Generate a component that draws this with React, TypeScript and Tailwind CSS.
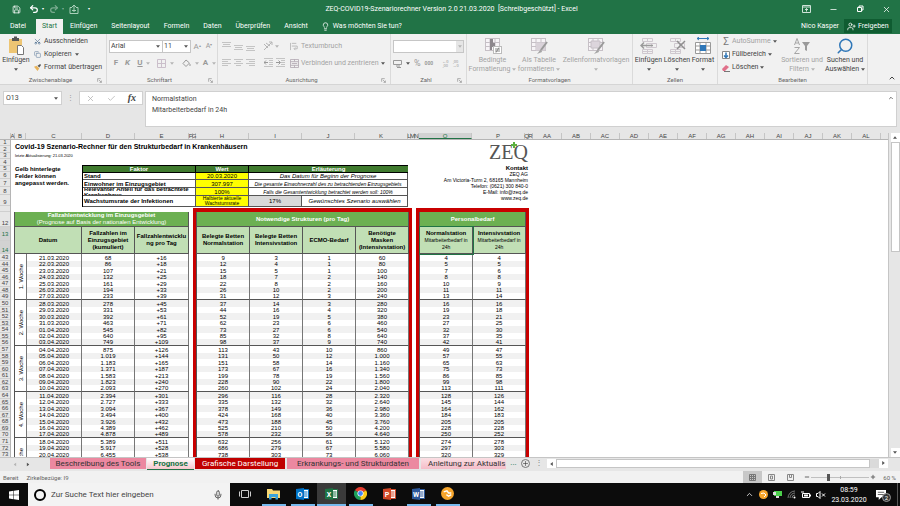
import React from "react";
import {
  ChevronUp,
  Lightbulb,
  Mic,
  Minus,
  Plus,
  Redo2,
  Save,
  Search,
  Undo2,
  X,
  Check,
  UserPlus,
  Copy,
  Scissors,
} from "lucide-react";

const menu = ["Einfügen", "Seitenlayout", "Formeln", "Daten", "Überprüfen", "Ansicht"];

const rowHeads = [
  { n: "1", h: "h-[6px]" },
  { n: "2", h: "h-[7px]" },
  { n: "3", h: "h-[6px]" },
  { n: "4", h: "h-[7px]" },
  { n: "5", h: "h-[6px]" },
  { n: "6", h: "h-[7px]" },
  { n: "7", h: "h-[8px]" },
  { n: "8", h: "h-[8px]" },
  { n: "9", h: "h-[11px]" },
  { n: "", h: "h-[6px]" },
  { n: "12", h: "h-[15px]" },
  { n: "13", h: "h-[14px]" },
  { n: "14", h: "h-[13px]" },
];

const colHeads = [
  { n: "A", w: "w-[4px]" },
  { n: "B", w: "w-[11px]" },
  { n: "C", w: "w-[56px]" },
  { n: "D", w: "w-[53px]" },
  { n: "E", w: "w-[54px]" },
  { n: "F", w: "w-[4px]" },
  { n: "G", w: "w-[3px]" },
  { n: "H", w: "w-[53px]" },
  { n: "I", w: "w-[53px]" },
  { n: "J", w: "w-[53px]" },
  { n: "K", w: "w-[53px]" },
  { n: "L", w: "w-[3px]" },
  { n: "M", w: "w-[4px]" },
  { n: "N", w: "w-[4px]" },
  { n: "O", w: "w-[53px]" },
  { n: "P", w: "w-[53px]" },
  { n: "Q", w: "w-[4px]" },
  { n: "R", w: "w-[4px]" },
  ...["AA", "AB", "AC", "AD", "AE", "AF", "AG", "AH", "AI", "AJ", "AK", "AL"].map((n) => ({
    n,
    w: "w-[29px]",
  })),
];

const days = [
  ["21.03.2020", "68", "+16", "9", "3", "1", "60", "4", "4"],
  ["22.03.2020", "86", "+18", "12", "4", "1", "80", "5", "5"],
  ["23.03.2020", "107", "+21", "15", "5", "1", "100", "7", "6"],
  ["24.03.2020", "132", "+25", "18", "7", "2", "140", "8", "8"],
  ["25.03.2020", "161", "+29", "22", "8", "2", "160", "10", "9"],
  ["26.03.2020", "194", "+33", "26", "10", "2", "200", "11", "11"],
  ["27.03.2020", "233", "+39", "31", "12", "3", "240", "13", "14"],
  ["28.03.2020", "278", "+45", "37", "14", "3", "280", "16", "16"],
  ["29.03.2020", "331", "+53", "44", "16", "4", "320", "19", "18"],
  ["30.03.2020", "392", "+61", "52", "19", "5", "380", "23", "21"],
  ["31.03.2020", "463", "+71", "62", "23", "6", "460", "27", "25"],
  ["01.04.2020", "545", "+82", "73", "27", "6", "540", "32", "30"],
  ["02.04.2020", "640", "+95", "85", "32", "8", "640", "37", "35"],
  ["03.04.2020", "749", "+109", "98", "37", "9", "740", "42", "41"],
  ["04.04.2020", "875", "+126", "113", "43", "10", "860", "49", "47"],
  ["05.04.2020", "1.019", "+144", "131", "50", "12", "1.000", "57", "55"],
  ["06.04.2020", "1.183", "+165", "151", "58", "14", "1.160", "65", "63"],
  ["07.04.2020", "1.371", "+187", "173", "67", "16", "1.340", "75", "73"],
  ["08.04.2020", "1.583", "+213", "199", "78", "19", "1.560", "86", "85"],
  ["09.04.2020", "1.823", "+240", "228", "90", "22", "1.800", "99", "98"],
  ["10.04.2020", "2.093", "+270", "260", "102", "24", "2.040", "113", "111"],
  ["11.04.2020", "2.394", "+301", "296", "116", "28", "2.320", "128", "126"],
  ["12.04.2020", "2.727", "+333", "335", "132", "32", "2.640", "145", "144"],
  ["13.04.2020", "3.094", "+367", "378", "149", "36", "2.980", "164", "162"],
  ["14.04.2020", "3.494", "+400", "424", "168", "40", "3.360", "184", "183"],
  ["15.04.2020", "3.926", "+432", "473", "188", "45", "3.760", "205", "205"],
  ["16.04.2020", "4.389", "+462", "525", "210", "50", "4.200", "228", "228"],
  ["17.04.2020", "4.878", "+489", "578", "232", "56", "4.640", "250", "252"],
  ["18.04.2020", "5.389", "+511", "632", "256", "61", "5.120", "274", "278"],
  ["19.04.2020", "5.917", "+528", "686", "279", "67", "5.580", "297", "303"],
  ["20.04.2020", "6.455", "+538", "738", "303", "73", "6.060", "320", "329"],
];

// a week takes 46px: 7 + 6 + 7 + 6 + 7 + 6 + 7
const rowHeight = (i: number) => (i % 7 === 1 || i % 7 === 3 || i % 7 === 5 ? "h-[6px]" : "h-[7px]");
const weekEnd = (i: number) => (i % 7 === 6 ? "border-b border-b-[#555]" : "");

function Caret({ dim }: { dim?: boolean }) {
  return (
    <svg viewBox="0 0 6 4" className={dim ? "w-1 h-[3px] shrink-0 text-[#b5b5b5]" : "w-1 h-[3px] shrink-0 text-[#555]"}>
      <path d="M0 0h6L3 4z" fill="currentColor" />
    </svg>
  );
}

function Launcher() {
  return (
    <svg viewBox="0 0 8 8" className="w-[5px] h-[5px]" fill="none" stroke="#888">
      <path d="M1 6V1h5M3 3l4 4M7 4v3H4" />
    </svg>
  );
}

function Group({
  label,
  width,
  launcher,
  children,
}: {
  label: string;
  width: string;
  launcher?: boolean;
  children: React.ReactNode;
}) {
  return (
    <section className={`${width} shrink-0 flex flex-col border-r border-[#dadada]`}>
      <div className="flex-1 flex">{children}</div>
      <div className="flex items-center h-[8px] px-1 text-[6px] leading-[8px] text-[#666]">
        <span className="flex-1 text-center">{label}</span>
        {launcher && <Launcher />}
      </div>
    </section>
  );
}

function AlignIcon({ mode }: { mode: string }) {
  const d: Record<string, string> = {
    top: "M0 .5h9M1 2.5h7M0 4.5h9",
    middle: "M0 3.5h9M1 5.5h7M0 7.5h9",
    bottom: "M0 4.5h9M1 6.5h7M0 8.5h9",
    left: "M0 1.5h9M0 3.5h6M0 5.5h9M0 7.5h6",
    center: "M0 1.5h9M2 3.5h5M0 5.5h9M2 7.5h5",
    right: "M0 1.5h9M3 3.5h6M0 5.5h9M3 7.5h6",
  };
  return (
    <button aria-label={mode} className="w-[12px] flex justify-center">
      <svg viewBox="0 0 9 9" className="w-[9px] h-[9px]" fill="none" stroke="#c4c4c4">
        <path d={d[mode]} />
      </svg>
    </button>
  );
}

function IndentIcon({ flip }: { flip?: boolean }) {
  return (
    <button aria-label={flip ? "Einzug vergrößern" : "Einzug verkleinern"} className="w-[12px] flex justify-center">
      <svg viewBox="0 0 9 9" className="w-[9px] h-[9px]" fill="none" stroke="#c4c4c4">
        <path d="M0 .5h9M5 2.5h4M5 4.5h4M5 6.5h4M0 8.5h9" />
        <path d={flip ? "M0 4.5h4M2.500 2.500l2 2-2 2" : "M0 4.500h4M2 2.500l-2 2 2 2"} stroke="#999" />
      </svg>
    </button>
  );
}

function TableIcon({ kind }: { kind: string }) {
  return (
    <svg viewBox="0 0 18 18" className="w-[18px] h-[18px]" fill="none">
      <rect x="1.500" y="1.500" width="14" height="12" fill="#f7f4f7" stroke="#c6c0c6" />
      <path d="M1.500 5.500h14M1.500 9.500h14M6 1.500v12M11 1.500v12" stroke="#c6c0c6" />
      {kind === "cond" && (
        <>
          <path d="M6 2h3v4H6zM6 6h5v4H6zM6 10h2v3H6z" fill="#8d878d" />
          <rect x="9.500" y="9.500" width="8" height="7" fill="#fff" stroke="#bbb" />
          <path d="M11 12h5M11 14h5M15 10.500l-3 5" stroke="#888" />
        </>
      )}
      {kind === "table" && (
        <>
          <path d="M6 5.500h9.500v8H6z" fill="#d9d2d9" />
          <path d="M17 5l-6 8" stroke="#9a9a9a" strokeWidth="2" />
          <path d="M11 12l-4 5 5-2z" fill="#a5a5a5" />
        </>
      )}
      {kind === "cell" && (
        <>
          <path d="M4 4h9v7H4z" fill="#dcd5dc" stroke="#c6c0c6" />
          <path d="M17 5l-6 8" stroke="#9a9a9a" strokeWidth="2" />
          <path d="M11 12l-4 5 5-2z" fill="#a5a5a5" />
        </>
      )}
    </svg>
  );
}

function CellsIcon({ kind }: { kind: string }) {
  return (
    <svg viewBox="0 0 18 18" className="w-[18px] h-[18px]" fill="none">
      {kind !== "format" && (
        <>
          <path d="M2.500 1.500h10v3h-10zM7.500 1.500v3M2.500 12.500h10v4h-10zM7.500 12.500v4M2.500 14.500h10" stroke="#cfc8cf" />
          <path d="M6.500 6.500h10v4h-10zM11.500 6.500v4" stroke="#cfc8cf" />
        </>
      )}
      {kind === "insert" && <path d="M1 8.500h12M4 5.500l-3 3 3 3" stroke="#9a9a9a" strokeWidth="1.500" />}
      {kind === "delete" && <path d="M9 4l8 8M17 4l-8 8" stroke="#8f8f8f" strokeWidth="1.500" />}
      {kind === "format" && (
        <>
          <path d="M3 1.500h12M5 0L3 1.500 5 3M13 0l2 1.500L13 3" stroke="#2f77b8" />
          <path d="M1.500 5.500h15v11h-15zM1.500 9h15M1.500 13h15M6 5.500v11M12 5.500v11" fill="#fff" stroke="#999" />
          <path d="M6 8h6v6H6z" fill="#2f77b8" />
        </>
      )}
    </svg>
  );
}

function BigButton({
  icon,
  lines,
  width,
  dim,
}: {
  icon: React.ReactNode;
  lines: string[];
  width: string;
  dim?: boolean;
}) {
  return (
    <button
      className={`${width} shrink-0 flex flex-col items-center pt-[3px] text-[7px] leading-[9px] whitespace-nowrap ${
        dim ? "text-[#a3a3a3]" : "text-[#444]"
      }`}
    >
      {icon}
      <span className="mt-px">{lines[0]}</span>
      <span className="flex items-center gap-[2px] h-[9px]">
        {lines[1]}
        <Caret dim={dim} />
      </span>
    </button>
  );
}

function TitleBar() {
  return (
    <header className="bg-[#217346] text-white shrink-0">
      <div className="flex items-center h-[18px] pl-3 pr-[9px]">
        <div className="flex items-center gap-[5px] flex-1">
          <button aria-label="Speichern">
            <Save className="w-[9px] h-[9px]" />
          </button>
          <button aria-label="Rückgängig" className="flex items-center gap-[3px] ml-[3px]">
            <Undo2 className="w-[10px] h-[10px]" strokeWidth={3} />
            <span className="text-[4px]">▾</span>
          </button>
          <button aria-label="Wiederholen" className="flex items-center gap-[3px] opacity-40">
            <Redo2 className="w-[10px] h-[10px]" strokeWidth={3} />
            <span className="text-[4px]">▾</span>
          </button>
          <button aria-label="Touchmodus">
            <svg viewBox="0 0 10 10" className="w-[10px] h-[10px]" fill="none" stroke="#a9cfb9">
              <path d="M1 3.500h2M7 3.500h2v6H1v-6M5 8V1M3 3l2-2 2 2M3 6.500h4" />
            </svg>
          </button>
          <span className="text-[4px] ml-1">▾</span>
        </div>
        <h1 className="text-[7px] whitespace-pre">
          ZEQ-COVID19-Szenariorechner Version 2.0 21.03.2020 {" "}[Schreibgeschützt] - Excel
        </h1>
        <div className="flex items-center justify-end gap-[18px] flex-1">
          <button aria-label="Menüband-Anzeigeoptionen">
            <svg viewBox="0 0 9 8" className="w-[9px] h-[8px]" fill="none" stroke="#cfe3d8">
              <path d="M.5.500h8v7h-8zM.5 2h8M4.500 6.500v-3M3 5l1.500-1.500L6 5" />
            </svg>
          </button>
          <button aria-label="Minimieren">
            <Minus className="w-[9px] h-[9px]" strokeWidth={2} />
          </button>
          <button aria-label="Verkleinern">
            <svg viewBox="0 0 8 8" className="w-[8px] h-[8px]" fill="none" stroke="#fff">
              <path d="M1.500 2.500h4v4h-4zM3 2.500v-1.500h4v4H5.500" />
            </svg>
          </button>
          <button aria-label="Schließen">
            <X className="w-[9px] h-[9px]" strokeWidth={2} />
          </button>
        </div>
      </div>
      <nav className="flex items-end h-[16px] text-[7px] pb-px">
        <button className="w-[36px] h-[14px] text-center">Datei</button>
        <button className="w-[27px] h-[15px] -mb-px bg-[#f1f1f1] text-[#217346]">Start</button>
        <div className="flex items-center h-[14px] gap-[14px] pl-[7px]">
          {menu.map((m) => (
            <button key={m}>{m}</button>
          ))}
        </div>
        <button className="flex items-center h-[14px] gap-[3px] pl-[13px]">
          <Lightbulb className="w-[9px] h-[9px]" />
          Was möchten Sie tun?
        </button>
        <span className="ml-auto h-[14px] flex items-center pr-[5px]">Nico Kasper</span>
        <button className="flex items-center gap-[2px] h-[14px] w-[48px] mr-[8px] pl-[3px] bg-[#0f5c31]">
          <UserPlus className="w-[9px] h-[9px]" />
          Freigeben
        </button>
      </nav>
    </header>
  );
}

function Ribbon() {
  return (
    <div className="flex h-[51px] bg-[#f1f1f1] text-[#444] text-[7px] border-b border-[#d5d5d5] shrink-0">
      <Group label="Zwischenablage" width="w-[107px]" launcher>
        <button className="w-[32px] shrink-0 flex flex-col items-center pt-[2px]">
          <svg viewBox="0 0 18 20" className="w-[18px] h-[20px]" fill="none">
            <path d="M2 3h13v14H2z" fill="#edc573" />
            <path d="M5 2h7v3H5zM7 .500h3v2H7z" fill="#555" />
            <path d="M10.500 9.500h4l2 2v7h-6z" fill="#fff" stroke="#777" />
          </svg>
          <span className="leading-[9px]">Einfügen</span>
          <span className="mt-[3px]">
            <Caret />
          </span>
        </button>
        <div className="flex flex-col pt-[1px] pl-[2px] leading-[13px]">
          <button className="flex items-center gap-[3px]">
            <Scissors className="w-[7px] h-[7px] -rotate-90 text-[#47698c]" />
            Ausschneiden
          </button>
          <button className="flex items-center gap-[3px]">
            <Copy className="w-[7px] h-[7px] text-[#6a86a3]" />
            Kopieren <Caret />
          </button>
          <button className="flex items-center gap-[3px] whitespace-nowrap">
            <svg viewBox="0 0 8 8" className="w-[7px] h-[7px]">
              <path d="M0 3l3-1 3 3-2 3z" fill="#e8b35a" />
              <path d="M4 2l3-2 1 1-2 3z" fill="#555" />
            </svg>
            Format übertragen
          </button>
        </div>
      </Group>

      <Group label="Schriftart" width="w-[111px]" launcher>
        <div className="flex flex-col w-full pl-[2px] pt-[6px] gap-[5px]">
          <div className="flex items-center">
            <span className="flex items-center w-[54px] h-[13px] bg-white border border-[#c6c6c6] pr-[2px]">
              <select aria-label="Schriftart" className="appearance-none flex-1 min-w-0 pl-px outline-none">
                <option>Arial</option>
              </select>
              <Caret />
            </span>
            <span className="flex items-center w-[28px] h-[13px] bg-white border border-l-0 border-[#c6c6c6] pr-[2px]">
              <select aria-label="Schriftgrad" className="appearance-none flex-1 min-w-0 pl-px outline-none">
                <option>11</option>
              </select>
              <Caret />
            </span>
            <button className="w-[12px] text-[8px] text-[#999]">A<sup className="text-[4px]">▴</sup></button>
            <button className="w-[12px] text-[#999]">A<sup className="text-[4px]">▾</sup></button>
          </div>
          <div className="flex items-center text-[#999] text-[8px] leading-[10px] pl-[2px]">
            <button className="w-[10px] font-bold">F</button>
            <button className="w-[13px] font-bold italic">K</button>
            <button className="w-[12px] font-bold underline">U</button>
            <Caret dim />
            <button aria-label="Rahmen" className="ml-[7px] mr-[4px]">
              <svg viewBox="0 0 9 9" className="w-[9px] h-[9px]" fill="none" stroke="#cbbfcb">
                <path d="M.5.500h8v8h-8zM4.500.500v8M.5 4.500h8" />
              </svg>
            </button>
            <Caret dim />
            <button aria-label="Füllfarbe" className="ml-[8px] mr-[4px]">
              <svg viewBox="0 0 9 9" className="w-[9px] h-[9px]" fill="none" stroke="#999">
                <path d="M4 1L1 4.500 4 7.500l3.500-3.500zM8 5v2" />
              </svg>
            </button>
            <Caret dim />
            <button className="w-[13px] font-bold">A</button>
            <Caret dim />
          </div>
        </div>
      </Group>

      <Group label="Ausrichtung" width="w-[173px]" launcher>
        <div className="flex w-full pl-[2px] text-[#a3a3a3]">
          <div className="flex flex-col gap-[7px] pt-[7px]">
            <div className="flex items-center">
              <AlignIcon mode="top" />
              <AlignIcon mode="middle" />
              <AlignIcon mode="bottom" />
              <button aria-label="Ausrichtung" className="ml-[7px] mr-[2px]">
                <svg viewBox="0 0 10 10" className="w-[10px] h-[10px]" fill="none" stroke="#b5b5b5">
                  <path d="M1 9l8-8M6 1h3v3M1 3l4 4M3 2l4 3" />
                </svg>
              </button>
              <Caret dim />
            </div>
            <div className="flex items-center">
              <AlignIcon mode="left" />
              <AlignIcon mode="center" />
              <AlignIcon mode="right" />
              <span className="w-[6px]" />
              <IndentIcon />
              <IndentIcon flip />
            </div>
          </div>
          <div className="flex flex-col gap-[7px] pt-[7px] pl-[4px]">
            <button className="flex items-center gap-[2px] h-[10px]">
              <svg viewBox="0 0 10 10" className="w-[9px] h-[9px]" fill="none" stroke="#b5b5b5">
                <path d="M.5 1v8M2 1.500h5M2 4.500h6v3H5M6 6L4.500 7.500 6 9" />
              </svg>
              Textumbruch
            </button>
            <button className="flex items-center gap-[2px] h-[10px] whitespace-nowrap">
              <svg viewBox="0 0 10 10" className="w-[9px] h-[9px]" fill="none" stroke="#b5adb5">
                <path d="M.5.500h9v9h-9zM.5 3h9M.5 7h9M5 0v3M5 7v3M2 5h6" />
              </svg>
              Verbinden und zentrieren
              <Caret />
            </button>
          </div>
        </div>
      </Group>

      <Group label="Zahl" width="w-[76px]" launcher>
        <div className="flex flex-col pl-[2px] pt-[6px] gap-[6px]">
          <span className="flex items-center w-[71px] h-[13px] bg-white border border-[#c6c6c6]">
            <select aria-label="Zahlenformat" className="appearance-none flex-1 h-full outline-none" />
            <span className="w-[7px] h-full flex items-center justify-center bg-[#e6e6e6]">
              <Caret dim />
            </span>
          </span>
          <div className="flex items-center gap-[4px] text-[#999]">
            <button aria-label="Währung" className="flex items-center gap-[3px]">
              <svg viewBox="0 0 10 8" className="w-[10px] h-[8px]" fill="none" stroke="#999">
                <path d="M.5.500h8v4h-8zM3 6h4M4 7.500h4" />
              </svg>
              <Caret />
            </button>
            <button className="text-[9px] leading-[9px]">%</button>
            <button className="text-[5px] font-bold">000</button>
            <button className="text-[4px] leading-[4px] ml-[5px]">
              ←0
              <br />
              ,00
            </button>
            <button className="text-[4px] leading-[4px]">
              ,00
              <br />
              →0
            </button>
          </div>
        </div>
      </Group>

      <Group label="Formatvorlagen" width="w-[166px]">
        <BigButton width="w-[51px]" dim icon={<TableIcon kind="cond" />} lines={["Bedingte", "Formatierung"]} />
        <BigButton width="w-[42px]" dim icon={<TableIcon kind="table" />} lines={["Als Tabelle", "formatieren"]} />
        <BigButton width="w-[72px]" dim icon={<TableIcon kind="cell" />} lines={["Zellenformatvorlagen", ""]} />
      </Group>

      <Group label="Zellen" width="w-[85px]">
        <BigButton width="w-[31px]" icon={<CellsIcon kind="insert" />} lines={["Einfügen", ""]} />
        <BigButton width="w-[26px]" icon={<CellsIcon kind="delete" />} lines={["Löschen", ""]} />
        <BigButton width="w-[26px]" icon={<CellsIcon kind="format" />} lines={["Format", ""]} />
      </Group>

      <Group label="Bearbeiten" width="w-[150px]">
        <div className="flex flex-col w-[62px] shrink-0 pl-[4px] pt-[1px] leading-[13px]">
          <button className="flex items-center gap-[2px] text-[#a3a3a3]">
            <span className="w-[8px] text-[10px] text-[#777]">Σ</span>
            AutoSumme
            <Caret />
          </button>
          <button className="flex items-center gap-[2px]">
            <svg viewBox="0 0 8 8" className="w-[8px] h-[8px]" fill="none">
              <path d="M.5.500h7v7h-7z" fill="#fff" stroke="#888" />
              <path d="M4 1.500v5M2 4.500l2 2 2-2" stroke="#2f77b8" strokeWidth="1.500" />
            </svg>
            Füllbereich
            <Caret />
          </button>
          <button className="flex items-center gap-[2px]">
            <svg viewBox="0 0 8 8" className="w-[8px] h-[8px]">
              <path d="M0 5l4-4 3 2-4 4H1z" fill="#e0708a" />
              <path d="M2 7.500h6" stroke="#777" />
            </svg>
            Löschen
            <Caret />
          </button>
        </div>
        <BigButton
          width="w-[44px]"
          dim
          lines={["Sortieren und", "Filtern"]}
          icon={
            <svg viewBox="0 0 18 18" className="w-[18px] h-[18px]" fill="none" stroke="#a5a5a5">
              <path d="M1.500 8l2.500-6.500L6.500 8M2.500 6h3M1.500 10.500h5l-5 6h5" />
              <path d="M9 5h8l-3 4v5l-2-1V9z" fill="#9a9a9a" stroke="none" />
            </svg>
          }
        />
        <BigButton
          width="w-[42px]"
          lines={["Suchen und", "Auswählen"]}
          icon={<Search className="w-[18px] h-[18px] -scale-x-100 text-[#2f77b8]" strokeWidth={2} />}
        />
      </Group>
      <button aria-label="Menüband reduzieren" className="ml-auto self-end p-[2px] pr-[4px]">
        <ChevronUp className="w-[8px] h-[8px]" strokeWidth={3} />
      </button>
    </div>
  );
}

function FormulaBar() {
  return (
    <div className="flex items-start gap-[2px] bg-[#e6e6e6] pt-[6px] pb-[6px] pr-[3px] text-[7px] text-[#444] shrink-0">
      <label className="flex items-center ml-[3px] w-[59px] h-[14px] bg-white border border-[#d0d0d0] pr-[3px]">
        <input aria-label="Namenfeld" defaultValue="O13" className="flex-1 min-w-0 pl-[2px] outline-none" />
        <Caret />
      </label>
      <span className="w-[13px] text-center text-[#999] leading-[14px]">⋮</span>
      <div className="flex items-center justify-around w-[64px] h-[14px] bg-white border border-[#d0d0d0]">
        <button aria-label="Abbrechen">
          <X className="w-[9px] h-[9px] text-[#b0b0b0]" />
        </button>
        <button aria-label="Eingeben">
          <Check className="w-[9px] h-[9px] text-[#b0b0b0]" />
        </button>
        <button aria-label="Funktion einfügen" className="font-['Liberation_Serif',serif] italic font-bold text-[10px] leading-[12px]">
          fx
        </button>
      </div>
      <div className="flex flex-1 h-[36px] bg-white border border-[#d0d0d0] pr-[2px] pt-[2px]">
        <textarea
          aria-label="Bearbeitungsleiste"
          readOnly
          defaultValue={"Normalstation\nMitarbeiterbedarf in 24h"}
          className="flex-1 pl-[6px] leading-[11px] resize-none outline-none"
        />
        <ChevronUp className="w-[6px] h-[6px] mt-px" strokeWidth={3} />
      </div>
    </div>
  );
}

function ColumnHeads() {
  return (
    <div className="flex h-[7px] bg-[#e6e6e6] border-b border-[#b5b5b5] text-[6px] leading-[6px] text-[#444] overflow-hidden shrink-0">
      <div className="w-[11px] shrink-0 border-r border-[#c5c5c5]" />
      {colHeads.map((c) => (
        <div
          key={c.n}
          className={`${c.w} shrink-0 flex justify-center border-r ${
            c.n === "O" ? "bg-[#d2d2d2] border-b border-b-[#217346] border-r-[#c5c5c5] text-[#217346]" : "border-[#c5c5c5]"
          }`}
        >
          {c.n}
        </div>
      ))}
    </div>
  );
}

function RowHeads() {
  return (
    <div className="w-[11px] shrink-0 bg-[#e6e6e6] border-r border-[#b5b5b5] text-[6px] leading-[6px] text-[#444] text-center">
      {rowHeads.map((r) => (
        <div
          key={r.h + r.n}
          className={`${r.h} flex justify-center border-b border-[#cfcfcf] ${
            r.n === "13" || r.n === "14" ? "bg-[#d2d2d2] text-[#217346]" : ""
          } ${r.n === "13" ? "items-center" : "items-end"}`}
        >
          {r.n}
        </div>
      ))}
      {days.map((d, i) => (
        <div key={d[0]} className={`${rowHeight(i)} border-b border-[#cfcfcf]`}>
          {43 + i}
        </div>
      ))}
    </div>
  );
}

function FactorTable() {
  return (
    <table className="w-[326px] table-fixed border-separate border-spacing-0 border-t border-l border-black text-[6px] leading-[6px] text-center [&_td]:border-r [&_td]:border-b [&_td]:border-[#555] [&_th]:border-b [&_th]:border-black">
      <colgroup>
        <col className="w-[113px]" />
        <col className="w-[53px]" />
        <col className="w-[53px]" />
        <col />
      </colgroup>
      <thead className="bg-[#3f7a2e] text-white">
        <tr className="h-[7px]">
          <th className="border-r">Faktor</th>
          <th className="border-r">Wert</th>
          <th colSpan={2}>Erläuterung</th>
        </tr>
      </thead>
      <tbody>
        <tr className="h-[7px]">
          <td className="text-left font-bold pl-px">Stand</td>
          <td className="bg-[#ffff00]">20.03.2020</td>
          <td colSpan={2} className="italic">
            Das Datum für Beginn der Prognose
          </td>
        </tr>
        <tr className="h-[8px]">
          <td className="text-left font-bold pl-px">Einwohner im Einzugsgebiet</td>
          <td className="bg-[#ffff00]">307.997</td>
          <td colSpan={2} className="italic">
            <div className="flex justify-center overflow-hidden whitespace-nowrap text-[5px]">
              Die gesamte Einwohnerzahl des zu betrachtenden Einzugsgebiets
            </div>
          </td>
        </tr>
        <tr className="h-[8px]">
          <td className="text-left font-bold pl-px">
            <div className="flex flex-col justify-center h-[7px] overflow-hidden">
              <span>Relevanter Anteil für das betrachtete</span>
              <span>Krankenhaus</span>
            </div>
          </td>
          <td className="bg-[#ffff00]">100%</td>
          <td colSpan={2} className="italic text-[5px]">
            Falls die Gesamtentwicklung betrachtet werden soll: 100%
          </td>
        </tr>
        <tr className="h-[11px]">
          <td className="text-left font-bold pl-px">Wachstumsrate der Infektionen</td>
          <td className="bg-[#ffff00] text-[5px] leading-[5px]">Halbierte aktuelle Wachstumsrate</td>
          <td className="bg-[#d9d9d9]">17%</td>
          <td className="italic">Gewünschtes Szenario auswählen</td>
        </tr>
      </tbody>
    </table>
  );
}

const gridTable =
  "table-fixed border-separate border-spacing-0 text-center text-[6px] leading-[6px] border-l border-[#555] [&_td]:border-r [&_td]:border-r-[#777] [&_th]:border-r [&_th]:border-[#555]";
const titleCell = "h-[15px] bg-[#6cb052] text-white leading-[7px] border-b";
const headCell = "h-[27px] bg-[#c1dfb5] leading-[7px] border-b";
const redFrame = "ml-[4px] shrink-0 border-x-[3px] border-t-[4px] border-[#c80000]";

function CasesTable() {
  return (
    <table className={`w-[174px] mt-[4px] shrink-0 ${gridTable}`}>
      <colgroup>
        <col className="w-[12px]" />
        <col className="w-[55px]" />
        <col className="w-[53px]" />
        <col className="w-[54px]" />
      </colgroup>
      <thead>
        <tr>
          <th colSpan={4} className={titleCell}>
            Fallzahlentwicklung im Einzugsgebiet
            <br />
            <span className="font-normal">(Prognose auf Basis der nationalen Entwicklung)</span>
          </th>
        </tr>
        <tr>
          <th colSpan={2} className={headCell}>
            Datum
          </th>
          <th className={headCell}>Fallzahlen im Einzugsgebiet (kumuliert)</th>
          <th className={headCell}>
            Fallzahlentwicklu
            <br />
            ng pro Tag
          </th>
        </tr>
      </thead>
      <tbody>
        {days.map((d, i) => (
          <tr key={d[0]} className={`${rowHeight(i)} ${i % 2 ? "bg-[#f1f1f1]" : "bg-white"}`}>
            {i % 7 === 0 && (
              <td rowSpan={Math.min(7, days.length - i)} className="bg-white align-top border-b border-b-[#555]">
                {/* the last week runs on below the window */}
                <div className={`overflow-hidden ${days.length - i < 7 ? "h-[18px]" : "h-[45px]"}`}>
                  <div className="flex items-center justify-center h-[45px]">
                    <span className="[writing-mode:vertical-rl] rotate-180 whitespace-nowrap">{i / 7 + 1}. Woche</span>
                  </div>
                </div>
              </td>
            )}
            {d.slice(0, 3).map((v, k) => (
              <td key={k} className={weekEnd(i)}>
                {v}
              </td>
            ))}
          </tr>
        ))}
      </tbody>
    </table>
  );
}

function NeedsTable() {
  return (
    <div className={redFrame}>
      <table className={`w-[213px] ${gridTable}`}>
        <thead>
          <tr>
            <th colSpan={4} className={titleCell}>
              Notwendige Strukturen (pro Tag)
            </th>
          </tr>
          <tr>
            <th className={headCell}>Belegte Betten Normalstation</th>
            <th className={headCell}>Belegte Betten Intensivstation</th>
            <th className={headCell}>ECMO-Bedarf</th>
            <th className={headCell}>
              Benötigte
              <br />
              Masken
              <br />
              (Intensivstation)
            </th>
          </tr>
        </thead>
        <tbody>
          {days.map((d, i) => (
            <tr key={d[0]} className={`${rowHeight(i)} ${i % 2 ? "bg-[#f1f1f1]" : "bg-white"}`}>
              {d.slice(3, 7).map((v, k) => (
                <td key={k} className={weekEnd(i)}>
                  {v}
                </td>
              ))}
            </tr>
          ))}
        </tbody>
      </table>
    </div>
  );
}

function StaffTable() {
  return (
    <div className={redFrame}>
      <table className={`w-[107px] ${gridTable}`}>
        <thead>
          <tr>
            <th colSpan={2} className={titleCell}>
              Personalbedarf
            </th>
          </tr>
          <tr>
            <th className={`${headCell} outline outline-[#217346]`}>
              Normalstation
              <br />
              <span className="font-normal text-[5px]">
                Mitarbeiterbedarf in
                <br />
                24h
              </span>
            </th>
            <th className={headCell}>
              Intensivstation
              <br />
              <span className="font-normal text-[5px]">
                Mitarbeiterbedarf in
                <br />
                24h
              </span>
            </th>
          </tr>
        </thead>
        <tbody>
          {days.map((d, i) => (
            <tr key={d[0]} className={`${rowHeight(i)} ${i % 2 ? "bg-[#f1f1f1]" : "bg-white"}`}>
              {d.slice(7).map((v, k) => (
                <td key={k} className={weekEnd(i)}>
                  {v}
                </td>
              ))}
            </tr>
          ))}
        </tbody>
      </table>
    </div>
  );
}

function Sheet() {
  return (
    <main className="flex-1 min-h-0 flex bg-[#e6e6e6]">
      <div className="flex-1 min-w-0 flex flex-col font-['Liberation_Sans',sans-serif]">
        <ColumnHeads />
        <div className="flex flex-1 min-h-0 overflow-hidden bg-white text-black">
          <RowHeads />
          <div className="pl-[3px]">
            <div className="flex h-[68px] w-[514px] text-[6px]">
              <div className="w-[394px] shrink-0">
                <h2 className="text-[7px] leading-[13px] font-bold pl-px">
                  Covid-19 Szenario-Rechner für den Strukturbedarf in Krankenhäusern
                </h2>
                <p className="text-[4px] leading-[6px] pl-px">letzte Aktualisierung: 21.03.2020</p>
                <div className="flex mt-[6px]">
                  <p className="w-[68px] shrink-0 pl-px pt-px font-bold leading-[7px]">
                    Gelb hinterlegte
                    <br />
                    Felder können
                    <br />
                    angepasst werden.
                  </p>
                  <FactorTable />
                </div>
              </div>
              <address className="flex-1 not-italic text-right leading-[6px] text-[5px]">
                <div className="relative inline-block font-['Liberation_Serif',serif] text-[20px] leading-[25px] text-[#555]">
                  ZEQ
                  <svg viewBox="0 0 6 6" className="absolute right-[11px] top-[2px] w-[6px] h-[6px]">
                    <path d="M3 0v6M0 3h6" stroke="#5cb040" strokeWidth="2" />
                  </svg>
                </div>
                <p className="font-bold text-[6px]">Kontakt</p>
                <p>ZEQ AG</p>
                <p>Am Victoria-Turm 2, 68165 Mannheim</p>
                <p>Telefon: (0621) 300 840-0</p>
                <p>E-Mail: info@zeq.de</p>
                <p>www.zeq.de</p>
              </address>
            </div>
            <div className="flex items-start">
              <CasesTable />
              <NeedsTable />
              <StaffTable />
            </div>
          </div>
        </div>
      </div>
      <div className="w-[12px] flex flex-col items-center justify-between pl-px border-l border-[#c5c5c5]">
        <div className="flex flex-col">
          <button aria-label="Nach oben" className="w-[9px] h-[9px] bg-white flex items-center justify-center rotate-180">
            <Caret />
          </button>
          <div className="w-[9px] h-[110px] bg-white border border-[#c5c5c5]" />
        </div>
        <button aria-label="Nach unten" className="w-[9px] h-[9px] bg-white flex items-center justify-center">
          <Caret />
        </button>
      </div>
    </main>
  );
}

function SheetTabs() {
  return (
    <div className="flex items-start h-[14px] bg-[#e6e6e6] border-t border-[#c5c5c5] text-[8px] leading-[10px] text-[#333] shrink-0 pr-[12px]">
      <div className="w-[50px] shrink-0 flex items-center h-[12px] pl-[13px] gap-[9px]">
        <span className="rotate-90">
          <Caret dim />
        </span>
        <button aria-label="Nächstes Blatt" className="-rotate-90">
          <Caret />
        </button>
      </div>
      <button className="w-[96px] h-[11px] shrink-0 bg-[#ec88a0] whitespace-nowrap">Beschreibung des Tools</button>
      <button className="w-[47px] h-[12px] ml-px shrink-0 bg-linear-to-b from-white to-[#f7c6cd] border-b border-[#217346] font-bold text-[#217346]">
        Prognose
      </button>
      <button className="w-[90px] h-[11px] ml-px shrink-0 bg-[#c00000] text-white whitespace-nowrap">
        Grafische Darstellung
      </button>
      <button className="w-[132px] h-[11px] ml-[2px] shrink-0 bg-[#ec88a0] whitespace-nowrap">
        Erkrankungs- und Strukturdaten
      </button>
      <button className="w-[85px] h-[11px] ml-[2px] shrink-0 bg-linear-to-b from-[#fbdfe4] to-[#f5bcc8] text-left pl-[7px] whitespace-nowrap overflow-hidden">
        Anleitung zur Aktualis
      </button>
      <span className="w-[15px] shrink-0 text-center text-[#217346]">...</span>
      <button aria-label="Neues Blatt" className="w-[9px] h-[9px] mt-px shrink-0 rounded-full border border-[#777] flex items-center justify-center">
        <Plus className="w-[7px] h-[7px]" />
      </button>
      <span className="w-[17px] shrink-0 text-center text-[#888]">⋮</span>
      <div className="flex flex-1 h-[9px] mt-px">
        <button aria-label="Nach links" className="w-[9px] bg-white flex items-center justify-center rotate-90">
          <Caret />
        </button>
        <div className="flex-1 bg-white border border-[#c5c5c5]" />
        <div className="w-[9px] bg-[#dadada]" />
        <button aria-label="Nach rechts" className="w-[9px] bg-white flex items-center justify-center -rotate-90">
          <Caret />
        </button>
      </div>
    </div>
  );
}

function StatusBar() {
  return (
    <div className="flex items-center h-[12px] bg-[#f1f1f1] text-[6px] text-[#666] shrink-0 pl-[3px] pr-[4px]">
      <span>Bereit</span>
      <span className="ml-[8px]">Zirkelbezüge: I9</span>
      <div className="ml-auto flex items-center h-full">
        <button aria-label="Normal" className="w-[19px] h-full bg-[#c8c8c8] flex items-center justify-center">
          <svg viewBox="0 0 7 7" className="w-[7px] h-[7px]" fill="none" stroke="#777">
            <path d="M.5.500h6v6h-6zM.5 2.500h6M.5 4.500h6M2.500.500v6M4.500.500v6" />
          </svg>
        </button>
        <button aria-label="Seitenlayout" className="w-[19px] flex justify-center">
          <svg viewBox="0 0 7 7" className="w-[7px] h-[7px]" fill="none" stroke="#888">
            <path d="M.5.500h6v6h-6zM2.500 2h2v3h-2z" />
          </svg>
        </button>
        <button aria-label="Umbruchvorschau" className="w-[19px] flex justify-center">
          <svg viewBox="0 0 7 7" className="w-[7px] h-[7px]" fill="none" stroke="#888">
            <path d="M.5.500h6v6h-6zM2.500.500v3h2v-3" />
          </svg>
        </button>
        <Minus className="w-[6px] h-[6px] ml-[4px]" strokeWidth={4} />
        <div className="relative w-[58px] h-[7px] mx-px flex items-center">
          <span className="w-full h-px bg-[#c0c0c0]" />
          <span className="absolute left-[16px] w-[3px] h-[7px] bg-[#555]" />
          <span className="absolute left-[29px] w-px h-[3px] bg-[#aaa]" />
        </div>
        <Plus className="w-[6px] h-[6px]" strokeWidth={4} />
        <span className="w-[20px] text-right">60 %</span>
      </div>
    </div>
  );
}

function TaskButton({
  label,
  open,
  active,
  children,
}: {
  label: string;
  open?: boolean;
  active?: boolean;
  children: React.ReactNode;
}) {
  return (
    <button aria-label={label} className={`w-[29px] flex flex-col items-center ${active ? "bg-[#3a3a3a]" : ""}`}>
      <span className="flex-1 flex items-center">{children}</span>
      <span className={`h-[2px] ${active ? "w-full" : "w-[24px]"} ${open ? "bg-[#76b9ed]" : ""}`} />
    </button>
  );
}

function OfficeIcon({ letter, color }: { letter: string; color: string }) {
  return (
    <svg viewBox="0 0 13 12" className="w-[13px] h-[12px]">
      <path d="M7 1.500h5.500v9H7z" fill="#fff" stroke={color} />
      <path d="M8 4h3.500M8 6h3.500M8 8h3.500" stroke={color} />
      <path d="M0 1l8-1v12l-8-1z" fill={color} />
      <text x="4" y="8.500" fontSize="7" fontWeight="bold" textAnchor="middle" fill="#fff">
        {letter}
      </text>
    </svg>
  );
}

function Taskbar() {
  return (
    <footer className="flex h-[23px] bg-[#0c0c0c] text-white shrink-0">
      <button aria-label="Start" className="w-[28px] flex items-center justify-center">
        <svg viewBox="0 0 10 10" className="w-[10px] h-[10px]" fill="#fff">
          <path d="M0 1.500l4.500-.7v4H0zM5 .7L10 0v4.800H5zM0 5.300h4.500v4L0 8.600zM5 5.300h5V10l-5-.7z" />
        </svg>
      </button>
      <label className="flex items-center w-[202px] bg-[#f3f3f3] text-[#444] pl-[6px] pr-[7px]">
        <span className="w-[12px] h-[12px] rounded-full border-2 border-black" />
        <input
          placeholder="Zur Suche Text hier eingeben"
          aria-label="Suche"
          className="flex-1 min-w-0 ml-[5px] text-[8px] outline-none placeholder:text-[#444]"
        />
        <Mic className="w-[10px] h-[10px]" />
      </label>
      <div className="flex">
        <TaskButton label="Taskansicht">
          <svg viewBox="0 0 12 10" className="w-[12px] h-[10px]" fill="none" stroke="#ccc">
            <path d="M2.500 1.500h7v7h-7zM.5 2.500v5M11.500 2.500v5" />
          </svg>
        </TaskButton>
        <TaskButton label="Explorer" open>
          <svg viewBox="0 0 13 12" className="w-[13px] h-[12px]">
            <path d="M0 1h5l1 1.500h7V10H0z" fill="#f7d774" />
            <path d="M2 11.500V6h9v5.500H8.500V9h-4v2.500z" fill="#3ba3dc" />
          </svg>
        </TaskButton>
        <TaskButton label="Outlook" open>
          <OfficeIcon letter="O" color="#0072c6" />
        </TaskButton>
        <TaskButton label="Excel" open active>
          <OfficeIcon letter="X" color="#1f7244" />
        </TaskButton>
        <TaskButton label="Chrome" open>
          <svg viewBox="0 0 12 12" className="w-[13px] h-[13px]">
            <path d="M6 6L.8 3A6 6 0 0 1 11.200 3z" fill="#e33b2e" />
            <path d="M6 6L.8 3A6 6 0 0 0 6 12z" fill="#1da05a" />
            <path d="M6 6h-0L11.200 3A6 6 0 0 1 6 12z" fill="#fbc916" />
            <circle cx="6" cy="6" r="2.800" fill="#fff" />
            <circle cx="6" cy="6" r="2.200" fill="#4286f5" />
          </svg>
        </TaskButton>
        <TaskButton label="PowerPoint">
          <OfficeIcon letter="P" color="#d24726" />
        </TaskButton>
        <TaskButton label="Word" open>
          <OfficeIcon letter="W" color="#2b579a" />
        </TaskButton>
        <TaskButton label="Fernwartung" open>
          <svg viewBox="0 0 12 12" className="w-[13px] h-[13px]">
            <circle cx="6" cy="6" r="6" fill="#f6a52c" />
            <path d="M2.500 4.500l3-1 1.500 2 2.500 0M5 7l2 1.500L9.500 7" stroke="#fff" strokeWidth="1.300" fill="none" />
          </svg>
        </TaskButton>
      </div>
      <div className="ml-auto flex items-center gap-[5px]">
        <ChevronUp className="w-[9px] h-[9px]" />
        <svg viewBox="0 0 9 9" className="w-[9px] h-[9px]">
          <circle cx="4.500" cy="4.500" r="4.500" fill="#f6a52c" />
          <path d="M2 3.500l3-.5 2 2-2 2" stroke="#fff" fill="none" />
        </svg>
        <svg viewBox="0 0 9 9" className="w-[9px] h-[9px]">
          <path d="M1 1h8v5H1z" fill="#4bd04b" />
          <path d="M0 2h3v3H0zM3 6h3v2H3z" fill="#ddd" />
        </svg>
        <svg viewBox="0 0 9 9" className="w-[9px] h-[9px]" fill="none" stroke="#777">
          <path d="M1 8a7 7 0 0 1 7-7M3 8a5 5 0 0 1 5-5M5 8a3 3 0 0 1 3-3" />
          <circle cx="7.500" cy="7.500" r="1" fill="#fff" stroke="none" />
        </svg>
        <svg viewBox="0 0 10 8" className="w-[10px] h-[8px]" fill="none" stroke="#fff">
          <path d="M1.500 2.500h7v4h-7zM9.500 3.500v2M0 1h3" />
          <path d="M3 3.500h4v2H3z" fill="#fff" stroke="none" />
        </svg>
        <svg viewBox="0 0 10 8" className="w-[10px] h-[8px]" fill="none" stroke="#fff">
          <path d="M.5 2.500h1.500l2-2v7l-2-2H.5zM6 2.500l3 3M9 2.500l-3 3" />
        </svg>
        <time className="w-[36px] text-center text-[7px] leading-[10px]">
          08:59
          <br />
          23.03.2020
        </time>
        <button aria-label="Benachrichtigungen" className="relative w-[16px] h-[14px] ml-[4px]">
          <svg viewBox="0 0 11 11" className="w-[10px] h-[10px]">
            <path d="M0 0h11v8H6l-3 3V8H0z" fill="#fff" />
            <path d="M2 2.500h7M2 5h7" stroke="#555" />
          </svg>
          <span className="absolute right-[1px] bottom-0 w-[9px] h-[9px] rounded-full bg-[#333] border border-[#999] text-[6px] leading-[7px] text-center">
            2
          </span>
        </button>
        <span className="w-px h-full bg-[#555] mr-[2px]" />
      </div>
    </footer>
  );
}

export default function App() {
  return (
    <div className="h-screen flex flex-col overflow-hidden bg-[#e6e6e6] font-['Roboto','Noto_Sans',sans-serif]">
      <TitleBar />
      <Ribbon />
      <FormulaBar />
      <Sheet />
      <SheetTabs />
      <StatusBar />
      <Taskbar />
    </div>
  );
}
